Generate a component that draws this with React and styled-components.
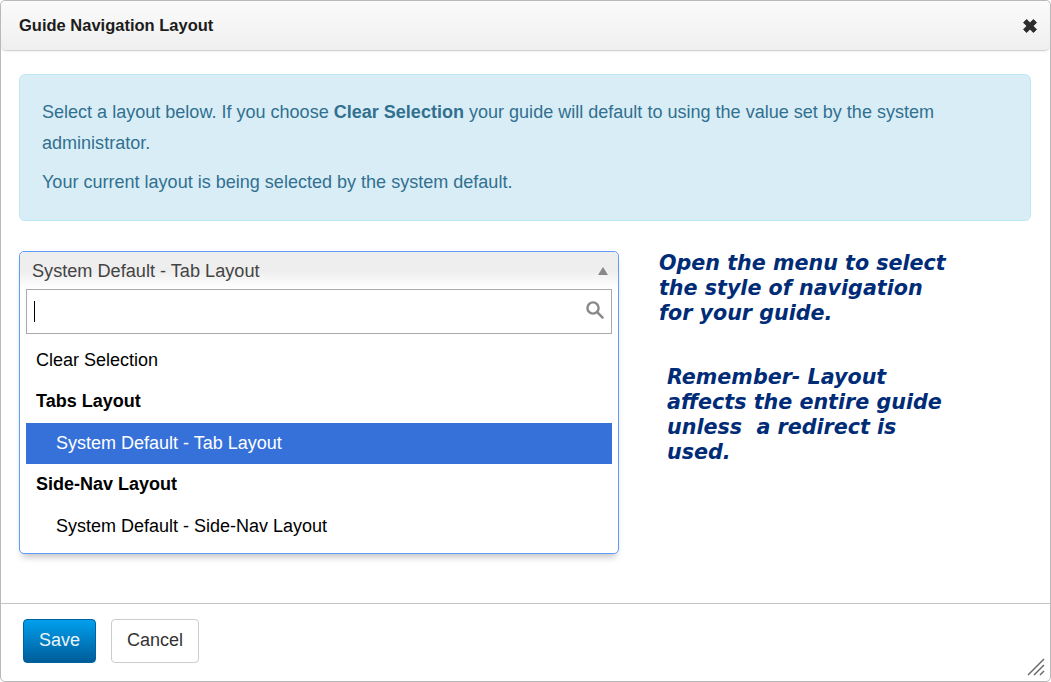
import React from 'react'
import styled, { createGlobalStyle } from 'styled-components'

const GlobalStyle = createGlobalStyle`
  html, body {
    margin: 0;
    padding: 0;
    background: #fff;
  }
  * {
    box-sizing: border-box;
  }
`

const App = () => {
  return (
    <>
      <GlobalStyle />
      <Dialog>
        <Header>
          <Title>Guide Navigation Layout</Title>
          <CloseIcon viewBox="0 0 16 16">
            <path d="M2.2 5 5 2.2 8 5.2 11 2.2 13.8 5 10.8 8 13.8 11 11 13.8 8 10.8 5 13.8 2.2 11 5.2 8Z" />
          </CloseIcon>
        </Header>

        <Body>
          <Alert>
            <AlertText>
              Select a layout below. If you choose <strong>Clear Selection</strong> your guide will
              default to using the value set by the system administrator.
            </AlertText>
            <AlertText>Your current layout is being selected by the system default.</AlertText>
          </Alert>

          <Columns>
            <SelectBox>
              <SelectHead>
                <span>System Default - Tab Layout</span>
                <Arrow />
              </SelectHead>
              <SearchBox>
                <Caret />
                <SearchIcon viewBox="0 0 20 20">
                  <circle cx="8" cy="8" r="5.6" />
                  <line x1="12.4" y1="12.4" x2="17.6" y2="17.6" />
                </SearchIcon>
              </SearchBox>
              <Options>
                <Option>Clear Selection</Option>
                <Option $group>Tabs Layout</Option>
                <Option $nested $active>System Default - Tab Layout</Option>
                <Option $group>Side-Nav Layout</Option>
                <Option $nested>System Default - Side-Nav Layout</Option>
              </Options>
            </SelectBox>

            <Notes>
              <Note>Open the menu to select<br />the style of navigation<br />for your guide.</Note>
              <Note $second>Remember- Layout<br />affects the entire guide<br />unless&nbsp; a redirect is<br />used.</Note>
            </Notes>
          </Columns>
        </Body>

        <Footer>
          <SaveButton>Save</SaveButton>
          <CancelButton>Cancel</CancelButton>
          <Grip viewBox="0 0 18 18">
            <line x1="1" y1="17" x2="17" y2="1" />
            <line x1="7" y1="17" x2="17" y2="7" />
            <line x1="13" y1="17" x2="17" y2="13" />
          </Grip>
        </Footer>
      </Dialog>
    </>
  )
}

// STYLED COMPONENTS
const Dialog = styled.div`
  width: 1051px;
  height: 682px;
  display: flex;
  flex-direction: column;
  background: #fff;
  border: 1px solid #b9b9b9;
  border-radius: 5px;
  font-family: "Liberation Sans", Arial, sans-serif;
  overflow: hidden;
`

const Header = styled.div`
  height: 50px;
  flex: none;
  display: flex;
  align-items: center;
  justify-content: space-between;
  padding: 0 11px 0 18px;
  background: linear-gradient(#fbfbfb, #efefef);
  border-bottom: 1px solid #d4d4d4;
  border-radius: 5px;
  box-shadow: 0 1px 2px rgba(0, 0, 0, 0.06);
`

const Title = styled.div`
  font-size: 16.5px;
  font-weight: bold;
  color: #1c1c1c;
`

const CloseIcon = styled.svg`
  width: 18px;
  height: 18px;
  fill: #2e2e2e;
  stroke: #2e2e2e;
  stroke-width: 0.8;
  stroke-linejoin: round;
`

const Body = styled.div`
  flex: 1;
  padding: 23px 19px 0 18px;
`

const Alert = styled.div`
  height: 147px;
  padding: 22px 22px 0;
  background: #d9edf7;
  border: 1px solid #bce8f1;
  border-radius: 6px;
  color: #31708f;
`

const AlertText = styled.p`
  margin: 0 0 8px;
  font-size: 18.04px;
  line-height: 31px;

  strong {
    font-weight: bold;
  }
`

const Columns = styled.div`
  display: flex;
  margin-top: 30px;
`

const SelectBox = styled.div`
  width: 600px;
  height: 303px;
  flex: none;
  background: #fff;
  border: 1px solid #5f9bf8;
  border-radius: 5px;
  box-shadow: 0 6px 7px -3px rgba(0, 0, 0, 0.24);
`

const SelectHead = styled.div`
  height: 37px;
  display: flex;
  align-items: center;
  justify-content: space-between;
  padding: 1px 10px 0 12px;
  font-size: 18.15px;
  color: #444;
  background: linear-gradient(#eee 50%, #fff);
  border-radius: 5px 5px 0 0;
`

const Arrow = styled.i`
  width: 0;
  height: 0;
  border-left: 5px solid transparent;
  border-right: 5px solid transparent;
  border-bottom: 8px solid #888;
`

const SearchBox = styled.div`
  height: 45px;
  margin: 0 6px;
  display: flex;
  align-items: center;
  justify-content: space-between;
  padding: 0 6px 0 7px;
  border: 1px solid #aaa;
`

const Caret = styled.i`
  width: 1px;
  height: 21px;
  background: #000;
`

const SearchIcon = styled.svg`
  width: 20px;
  height: 20px;
  margin-top: -3px;
  fill: none;
  stroke: #888;
  stroke-width: 2.4;
  stroke-linecap: round;
`

const Options = styled.div`
  margin: 5.8px 6px 0;
`

const Option = styled.div`
  height: 41.5px;
  display: flex;
  align-items: center;
  padding-left: ${(props) => (props.$nested ? '30px' : '10px')};
  padding-bottom: ${(props) => (props.$group ? '2px' : '0')};
  font-size: 18px;
  font-weight: ${(props) => (props.$group ? 'bold' : 'normal')};
  color: ${(props) => (props.$active ? '#fff' : '#000')};
  background: ${(props) => (props.$active ? '#3671d9' : 'transparent')};
`

const Notes = styled.div`
  padding-left: 40px;
`

const Note = styled.div`
  margin-left: ${(props) => (props.$second ? '8px' : '0')};
  margin-top: ${(props) => (props.$second ? '39px' : '0')};
  font-family: "DejaVu Sans", Verdana, sans-serif;
  font-size: 20.65px;
  font-weight: bold;
  font-style: italic;
  line-height: 25px;
  white-space: nowrap;
  color: #002c77;
`

const Footer = styled.div`
  height: 78px;
  flex: none;
  position: relative;
  display: flex;
  align-items: flex-start;
  gap: 15px;
  padding: 15px 0 0 22px;
  border-top: 1px solid #c4c4c4;
`

const SaveButton = styled.button`
  width: 73px;
  height: 44px;
  padding: 0 0 2px;
  font-family: inherit;
  font-size: 18px;
  color: #e8f4fb;
  background: linear-gradient(#009fee, #005c99);
  border: 1px solid #00639f;
  border-radius: 4px;
`

const CancelButton = styled.button`
  width: 88px;
  height: 44px;
  padding: 0 0 2px;
  font-family: inherit;
  font-size: 18px;
  color: #333;
  background: #fff;
  border: 1px solid #ccc;
  border-radius: 4px;
`

const Grip = styled.svg`
  position: absolute;
  right: 5px;
  bottom: 5px;
  width: 18px;
  height: 18px;
  stroke: #666;
  stroke-width: 1.4;
`

export default App
